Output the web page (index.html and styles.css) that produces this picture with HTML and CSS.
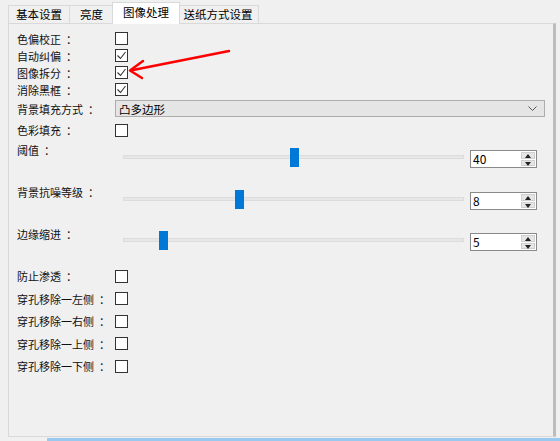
FILE: index.html
```html
<!DOCTYPE html>
<html lang="zh-CN">
<head>
    <meta charset="UTF-8">
    <title>图像处理</title>
    <link rel="stylesheet" href="styles.css">
</head>
<body>
    <div class="tabs">
        <div class="tab w1">基本设置</div>
        <div class="tab w2">亮度</div>
        <div class="tab active">图像处理</div>
        <div class="tab w4">送纸方式设置</div>
    </div>

    <div class="panel">
        <div class="row">
            <span class="label">色偏校正  ：</span>
            <span class="check"></span>
        </div>
        <div class="row">
            <span class="label">自动纠偏  ：</span>
            <span class="check checked"><svg viewBox="0 0 11 11"><path d="M1.5 5.5 L4.5 8.5 L9.5 2"/></svg></span>
        </div>
        <div class="row">
            <span class="label">图像拆分  ：</span>
            <span class="check checked"><svg viewBox="0 0 11 11"><path d="M1.5 5.5 L4.5 8.5 L9.5 2"/></svg></span>
        </div>
        <div class="row">
            <span class="label">消除黑框  ：</span>
            <span class="check checked"><svg viewBox="0 0 11 11"><path d="M1.5 5.5 L4.5 8.5 L9.5 2"/></svg></span>
        </div>
        <div class="row select-row">
            <span class="label">背景填充方式  ：</span>
            <div class="select">
                <span>凸多边形</span>
                <svg class="chevron" viewBox="0 0 9 5"><path d="M0.5 0.5 L4.5 4.5 L8.5 0.5"/></svg>
            </div>
        </div>
        <div class="row fill-row">
            <span class="label">色彩填充  ：</span>
            <span class="check"></span>
        </div>

        <div class="slider-row">
            <span class="label">阈值  ：</span>
            <div class="track"><span class="thumb" style="left: 166px"></span></div>
            <div class="spin"><span class="value">40</span><span class="arrows"><i class="up"></i><i class="down"></i></span></div>
        </div>
        <div class="slider-row">
            <span class="label">背景抗噪等级  ：</span>
            <div class="track"><span class="thumb" style="left: 111px"></span></div>
            <div class="spin"><span class="value">8</span><span class="arrows"><i class="up"></i><i class="down"></i></span></div>
        </div>
        <div class="slider-row last">
            <span class="label">边缘缩进  ：</span>
            <div class="track"><span class="thumb" style="left: 35px"></span></div>
            <div class="spin"><span class="value">5</span><span class="arrows"><i class="up"></i><i class="down"></i></span></div>
        </div>

        <div class="row tall">
            <span class="label">防止渗透  ：</span>
            <span class="check"></span>
        </div>
        <div class="row tall">
            <span class="label">穿孔移除一左侧  ：</span>
            <span class="check"></span>
        </div>
        <div class="row tall">
            <span class="label">穿孔移除一右侧  ：</span>
            <span class="check"></span>
        </div>
        <div class="row tall">
            <span class="label">穿孔移除一上侧  ：</span>
            <span class="check"></span>
        </div>
        <div class="row tall">
            <span class="label">穿孔移除一下侧  ：</span>
            <span class="check"></span>
        </div>
    </div>

    <div class="bottom-line"></div>

    <svg class="arrow" viewBox="0 0 560 441">
        <path d="M229 51 L133 70"/>
        <path d="M143 61 L130 70.5 L142 78"/>
    </svg>
</body>
</html>
```

FILE: styles.css
```css
body {
    margin: 0;
    width: 560px;
    height: 441px;
    overflow: hidden;
    position: relative;
    background-color: #f0f0f0;
    font-family: "Noto Sans CJK SC", "Liberation Sans", sans-serif;
    font-size: 11px;
    color: #000;
}

.tabs {
    display: flex;
    align-items: flex-end;
    height: 23px;
    padding-left: 8px;
    font-size: 11.5px;
}

.tab {
    box-sizing: border-box;
    height: 18px;
    line-height: 16px;
    text-align: center;
    border: 1px solid #d9d9d9;
    border-bottom: none;
    margin-left: -1px;
    background-color: #f0f0f0;
}

.tab:first-child {
    margin-left: 0;
}

.tab.w1 { width: 62px; }
.tab.w2 { width: 45px; }
.tab.w4 { width: 82px; }

.tab.active {
    width: 68px;
    height: 22px;
    line-height: 19px;
    margin-left: -2px;
    margin-right: -2px;
    margin-bottom: -1px;
    background-color: #fff;
    position: relative;
    z-index: 1;
}

.panel {
    box-sizing: border-box;
    margin-left: 8px;
    width: 548px;
    height: 414px;
    border: 1px solid #d9d9d9;
    border-right: 3px solid #bdbdbd;
    padding: 6px 0 0 8px;
}

.row {
    display: flex;
    align-items: center;
    height: 17px;
}

.label {
    width: 98px;
    flex-shrink: 0;
    white-space: pre;
    color: #111;
}

.check {
    box-sizing: border-box;
    width: 13px;
    height: 13px;
    border: 1px solid #333;
    background-color: #fff;
    display: flex;
}

.check svg {
    width: 11px;
    height: 11px;
    fill: none;
    stroke: #333;
    stroke-width: 1.1;
}

.select-row {
    height: 21px;
}

.select {
    box-sizing: border-box;
    width: 430px;
    height: 17px;
    border: 1px solid #adadad;
    background-color: #e5e5e5;
    display: flex;
    align-items: center;
    justify-content: space-between;
    padding: 0 7px 0 3px;
    font-size: 11.5px;
}

.chevron {
    width: 9px;
    height: 5px;
    fill: none;
    stroke: #555;
    stroke-width: 1;
}

.fill-row {
    height: 22px;
}

.slider-row {
    display: flex;
    align-items: flex-start;
    height: 42px;
}

.slider-row.last {
    height: 40px;
}

.slider-row .label {
    width: 106px;
    line-height: 16px;
    padding-top: 1px;
}

.track {
    position: relative;
    box-sizing: border-box;
    width: 341px;
    height: 4px;
    margin-top: 14px;
    background-color: #e7e7e7;
    border: 1px solid #dcdcdc;
}

.slider-row.last .track {
    margin-top: 13px;
}

.thumb {
    position: absolute;
    top: -8px;
    width: 9px;
    height: 19px;
    background-color: #0078d7;
}

.spin {
    box-sizing: border-box;
    margin-left: 6px;
    margin-top: 9px;
    width: 67px;
    height: 18px;
    border: 1px solid #8a8a8a;
    background-color: #fff;
    display: flex;
    justify-content: space-between;
    font-size: 12px;
}

.slider-row.last .spin {
    margin-top: 8px;
}

.spin .value {
    line-height: 16px;
    padding-left: 2px;
}

.arrows {
    width: 14px;
    margin: 1px;
    display: flex;
    flex-direction: column;
    gap: 1px;
}

.arrows i {
    flex: 1;
    background-color: #e5e5e5;
    border: 1px solid #cfcfcf;
    position: relative;
}

.arrows i::after {
    content: "";
    position: absolute;
    left: 3px;
    border-left: 3px solid transparent;
    border-right: 3px solid transparent;
}

.arrows .up::after {
    top: 1px;
    border-bottom: 4px solid #222;
}

.arrows .down::after {
    top: 1px;
    border-top: 4px solid #222;
}

.row.tall {
    height: 22.5px;
}

.bottom-line {
    margin-left: 47px;
    margin-top: 1px;
    height: 3px;
    background-color: #99c9ef;
}

.arrow {
    position: absolute;
    left: 0;
    top: 0;
    width: 560px;
    height: 441px;
    fill: none;
    stroke: #ff0000;
    stroke-width: 2.5;
    stroke-linecap: round;
    stroke-linejoin: round;
    pointer-events: none;
}
```
